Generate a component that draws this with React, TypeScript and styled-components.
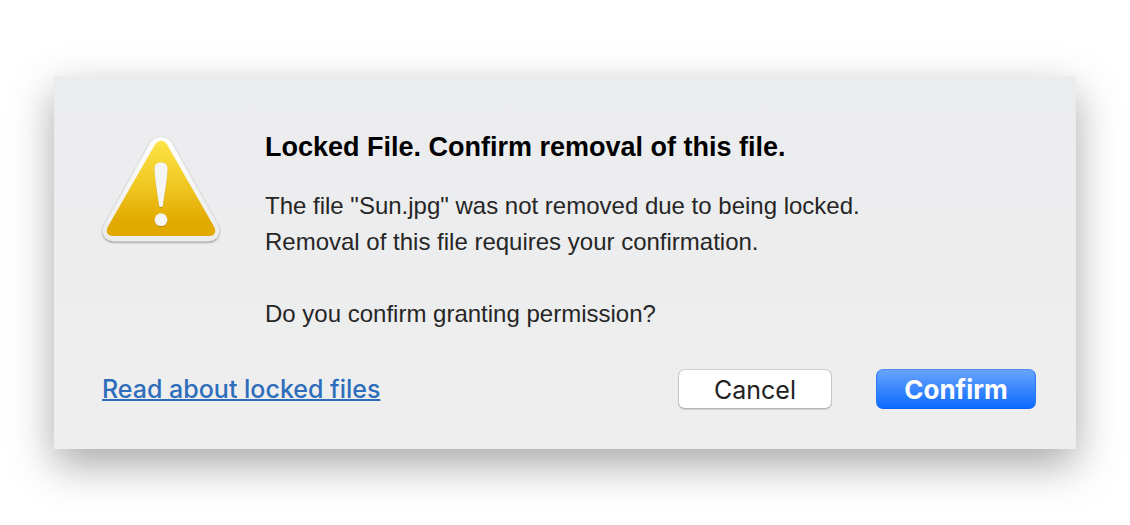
import React from 'react';
import styled, { createGlobalStyle, css } from 'styled-components';

const GlobalStyle = createGlobalStyle`
  *, *::before, *::after { box-sizing: border-box; }
  body {
    margin: 0;
    background: #fff;
    font-family: 'Liberation Sans', Arial, sans-serif;
  }
`;

const Page = styled.main`
  padding: 76px 54px;
`;

const Dialog = styled.section`
  display: flex;
  flex-direction: column;
  gap: 37px;
  padding: 52px 40px 40px 48px;
  background: linear-gradient(#ebecee, #eeeeee);
  box-shadow: 0 16px 40px rgba(0, 0, 0, 0.34);
`;

const Body = styled.div`
  display: flex;
  align-items: flex-start;
  gap: 44px;
`;

const Icon = styled.svg`
  flex: none;
  width: 120px;
  height: 112px;
  margin: 7px 0 0 -1px;
`;

const Copy = styled.div`
  min-width: 0;
`;

const Title = styled.h1`
  margin: 0 0 22px;
  font-size: 27px;
  line-height: 38px;
  font-weight: 700;
  color: #000;
`;

const Message = styled.p`
  margin: 0;
  font-size: 24px;
  line-height: 36px;
  color: #262626;

  & + & { margin-top: 36px; }
`;

const Footer = styled.footer`
  display: flex;
  align-items: center;
  justify-content: space-between;
`;

const HelpLink = styled.a`
  font-family: Inter, sans-serif;
  font-size: 25px;
  font-weight: 500;
  line-height: 40px;
  color: #2e6dbb;
  text-decoration-thickness: 2px;
  text-underline-offset: 1px;
  text-decoration-skip-ink: none;
`;

const Actions = styled.div`
  display: flex;
  gap: 44px;
`;

const Button = styled.button<{ $primary?: boolean }>`
  height: 40px;
  padding: 2px 0 0;
  border: 1px solid;
  border-radius: 7px;
  font-family: Inter, sans-serif;
  line-height: 36px;
  ${({ $primary }) =>
    $primary
      ? css`
          width: 160px;
          border-color: #4d8df5 #2a76f5 #0a62f5;
          background: linear-gradient(#6ba5fb, #0a69ff) border-box;
          color: #fff;
          font-size: 26px;
          font-weight: 700;
        `
      : css`
          width: 154px;
          border-color: #cfcfcf #c6c6c6 #b4b4b4;
          background: #fff;
          color: #222;
          font-size: 25px;
          box-shadow: 0 1px 1px rgba(0, 0, 0, 0.12);
        `}
`;

const WarningIcon = () => (
  <Icon viewBox="0 0 120 112" role="img" aria-label="Warning">
    <defs>
      <linearGradient id="fill" x1="0" y1="0" x2="0" y2="1">
        <stop offset="0" stopColor="#fde446" />
        <stop offset="0.5" stopColor="#efc51f" />
        <stop offset="0.85" stopColor="#e2a900" />
        <stop offset="1" stopColor="#e2a900" />
      </linearGradient>
      <linearGradient id="rim" x1="0" y1="0" x2="0" y2="1">
        <stop offset="0" stopColor="#ffffff" />
        <stop offset="1" stopColor="#ebebeb" />
      </linearGradient>
      <filter id="drop" x="-10%" y="-10%" width="120%" height="120%">
        <feDropShadow dx="0" dy="1" stdDeviation="1" floodOpacity="0.5" />
      </filter>
      <filter id="markDrop" x="-30%" y="-10%" width="160%" height="120%">
        <feDropShadow dx="0" dy="0.7" stdDeviation="0.5" floodColor="#7a5a00" floodOpacity="0.6" />
      </filter>
    </defs>
    <path
      filter="url(#drop)"
      fill="url(#rim)"
      d="M49 8.500C54 0.200 66 0.200 71 8.500L116.500 89.500C121 98 116 106.200 107.500 106.200H12.500C4 106.200 -1 98 3.500 89.500Z"
    />
    <path
      fill="url(#fill)"
      d="M54 9.500C57 4.500 63 4.500 66 9.500L113 91.500C116 97 113.500 101 108 101H12C6.500 101 4 97 7 91.500Z"
    />
    <g filter="url(#markDrop)" fill="#f5f5f5">
      <path d="M53.500 33.500C53.500 29.500 56 27.500 60 27.500S66.500 29.500 66.500 33.500C66.500 42 63.500 59 62 70Q61.800 72 60 72T58 70C56.500 59 53.500 42 53.500 33.500Z" />
      <circle cx="60" cy="84.700" r="6.400" />
    </g>
  </Icon>
);

export default function App() {
  return (
    <>
      <GlobalStyle />
      <Page>
        <Dialog role="alertdialog" aria-labelledby="title" aria-describedby="message">
          <Body>
            <WarningIcon />
            <Copy>
              <Title id="title">Locked File. Confirm removal of this file.</Title>
              <Message id="message">
                The file "Sun.jpg" was not removed due to being locked.
                <br />
                Removal of this file requires your confirmation.
              </Message>
              <Message>Do you confirm granting permission?</Message>
            </Copy>
          </Body>
          <Footer>
            <HelpLink href="#locked-files">Read about locked files</HelpLink>
            <Actions>
              <Button type="button">Cancel</Button>
              <Button type="button" $primary>
                Confirm
              </Button>
            </Actions>
          </Footer>
        </Dialog>
      </Page>
    </>
  );
}
